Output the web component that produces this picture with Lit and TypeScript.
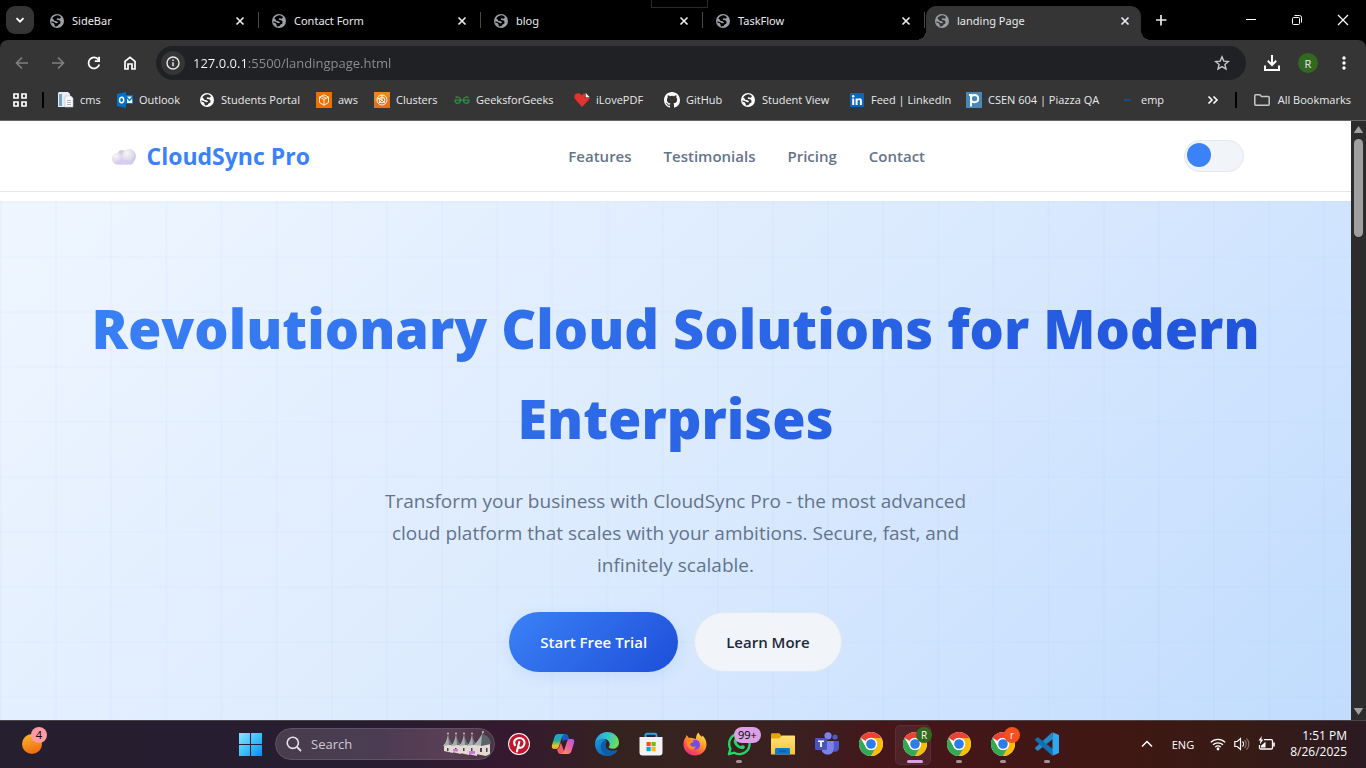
import { LitElement, html, svg, css, nothing } from "lit";
import { customElement, property } from "lit/decorators.js";
import { classMap } from "lit/directives/class-map.js";

const globe = (fg: string, bg: string) => html`<svg class="ico" width="16" height="16" viewBox="0 0 16 16" aria-hidden="true">
  <circle cx="8" cy="8" r="7" fill=${fg} />
  <path fill=${bg} d="M8.700 2.300 C6.500 2.300 4 3.700 3.300 5.600 L4.600 6.400 5.200 7.800 7.600 8.300 8.900 9.200 8.700 10.100 7 10.300 5.500 9.200 2.300 8.300 C2.400 10.500 4 12.800 6.400 13.500 L8.600 13 9.600 11.600 11.400 10.400 11.500 8.500 10.300 7.300 8.300 6.900 7.600 6 8.500 5.200 10.800 5.700 12 4.300 C11.200 3.300 10 2.500 8.700 2.300Z" />
  <path fill=${fg} d="M2.500 9.500 4.700 10.300 5.700 11.900 5.600 13.600 3.500 12.500Z" />
</svg>`;

const closeX = html`<svg width="16" height="16" viewBox="0 0 16 16" aria-hidden="true">
  <path d="M4.500 4.500 11.500 11.500M11.500 4.500 4.500 11.500" stroke="#e8eaed" stroke-width="1.700" />
</svg>`;

const chromeLogo = svg`
  <circle cx="12" cy="12" r="12" fill="#fff" />
  <path fill="#ea4335" d="M12 0a12 12 0 0 1 10.390 6H12a6 6 0 0 0-5.200 3L1.600 6A12 12 0 0 1 12 0Z" />
  <path fill="#fbbc04" d="M22.390 6A12 12 0 0 1 12 24l5.200-9A6 6 0 0 0 17.200 9L12 6Z" />
  <path fill="#34a853" d="M1.600 6 6.800 15A6 6 0 0 0 12 18a6 6 0 0 0 5.200-3L12 24A12 12 0 0 1 1.600 6Z" />
  <circle cx="12" cy="12" r="6.200" fill="#fff" />
  <circle cx="12" cy="12" r="4.800" fill="#2b7de9" />`;

const icons: Record<string, unknown> = {
  cms: html`<svg class="ico" width="16" height="16" viewBox="0 0 16 16"><path fill="#e9edf2" d="M1 0h9l2 2v13H0V1z" /><path fill="#6da3c9" d="M1 2h3v12H1z" /><path fill="#f8f9fb" d="M7 4h6l2 2v9H7z" stroke="#b9c0cc" stroke-width=".6" /><path stroke="#aab4c4" d="M9 8.500h4M9 10.500h4M9 12.500h4" /></svg>`,
  outlook: html`<svg class="ico" width="16" height="16" viewBox="0 0 16 16"><path fill="#0072c6" d="M0 2 9 0v16l-9-2z" /><path fill="#0072c6" d="M9 3h7v9H9z" /><path fill="#fff" d="M10 4.500h5L12.500 7.500zM10 6.500l2.500 3 2.700-3V11H10z" /><ellipse cx="4.600" cy="8" rx="2.100" ry="2.700" fill="none" stroke="#fff" stroke-width="1.500" /></svg>`,
  student: globe("#ffffff", "#353535"),
  aws: html`<svg class="ico" width="16" height="16" viewBox="0 0 16 16"><path fill="#ed7100" d="M0 0h16v16H0z" /><path fill="none" stroke="#fff" stroke-width=".9" d="M8 2.800 12.500 5v5.500L8 13.200l-4.500-2.700V5zM3.500 5 8 7.500 12.500 5M8 7.500v5.700M5.700 4l4.600 2.300" /></svg>`,
  clusters: html`<svg class="ico" width="16" height="16" viewBox="0 0 16 16"><path fill="#e2701d" d="M0 0h16v16H0z" /><path fill="#f29a1f" d="M0 0h16v5L0 10z" opacity=".6" /><circle cx="8" cy="8" r="5" fill="none" stroke="#fff" stroke-width=".9" /><circle cx="8" cy="8" r="2.800" fill="none" stroke="#fff" stroke-width=".9" /><path stroke="#fff" stroke-width=".9" d="m8 8 3.500 3.500M8 8l-3 3M8 3v5M3.500 6 8 8" /></svg>`,
  gfg: html`<svg class="ico" width="16" height="16" viewBox="0 0 16 16"><path fill="none" stroke="#2f8d46" stroke-width="1.300" d="M1.500 5.600c2-1.200 5-.6 5 2.500 0 2-1.300 3.200-2.800 3.200S1 10.200 1 8.200h14c0 2-1.200 3.100-2.700 3.100S9.500 10.100 9.500 8.100c0-3.100 3-3.700 5-2.500" /></svg>`,
  pdf: html`<svg class="ico" width="16" height="16" viewBox="0 0 16 16"><path fill="#e5322d" d="M8 15 1.400 7.600C-.8 4.600.8 1.300 3.800 1.200 5.700 1.100 7 2 8 3.600 8.800 2 10 1.200 11 1.200v4.500h4.800c-.1.700-.4 1.400-.9 2z" /><path fill="#fff" d="m11.700 1 4 4.200h-4z" /></svg>`,
  github: html`<svg class="ico" width="16" height="16" viewBox="0 0 16 16"><path fill="#fff" d="M8 0C3.580 0 0 3.580 0 8c0 3.540 2.290 6.530 5.470 7.590.4.070.55-.17.55-.38 0-.19-.01-.82-.01-1.490-2.010.37-2.530-.49-2.690-.94-.09-.23-.48-.94-.82-1.130-.28-.15-.68-.52-.01-.53.63-.01 1.080.58 1.230.82.72 1.210 1.870.87 2.330.66.07-.52.28-.87.510-1.070-1.780-.2-3.640-.89-3.640-3.950 0-.87.31-1.590.82-2.150-.08-.2-.36-1.020.08-2.120 0 0 .67-.21 2.200.82a7.500 7.500 0 0 1 4 0c1.530-1.040 2.200-.82 2.200-.82.44 1.100.16 1.920.08 2.120.51.56.82 1.270.82 2.150 0 3.070-1.870 3.750-3.650 3.950.29.25.54.73.54 1.480 0 1.070-.01 1.930-.01 2.200 0 .21.15.46.55.38A8.010 8.010 0 0 0 16 8c0-4.420-3.580-8-8-8Z" /></svg>`,
  linkedin: html`<svg class="ico" width="16" height="16" viewBox="0 0 16 16"><rect x="1" y="1" width="14" height="14" rx="1" fill="#0a66c2" /><path fill="#fff" d="M3.200 6.400h2V13h-2zM6.600 6.400h2v.9c.4-.7 1.100-1.100 2-1.100 1.800 0 2.300 1.200 2.300 2.900V13h-2V9.500c0-.9-.1-1.600-1-1.600s-1.300.7-1.300 1.600V13h-2z" /><circle cx="4.200" cy="4.300" r="1.200" fill="#fff" /></svg>`,
  piazza: html`<svg class="ico" width="16" height="16" viewBox="0 0 16 16"><path fill="#4b87b5" d="M0 0h16v16H0z" /><path fill="none" stroke="#fff" stroke-width="1.900" d="M3 3h2v11.500M5 6c0-2 1.200-3 3.400-3 2.500 0 3.800 1.500 3.800 3.600S10.800 10.300 8.500 10.300 5 9 5 7z" /></svg>`,
  emp: html`<svg class="ico" width="16" height="16" viewBox="0 0 16 16"><path fill="#14508c" d="M5 7.200h7l-.6 1.800H4.600z" /></svg>`,

  pinterest: html`<svg width="24" height="24" viewBox="0 0 24 24"><circle cx="12" cy="12" r="11" fill="#fff" /><circle cx="12" cy="12" r="10" fill="#c1182c" /><path fill="none" stroke="#fff" stroke-width="2.100" stroke-linecap="round" d="M7.900 13.200C5.800 9.300 8.600 6 12.300 6c3.300 0 5.400 2.100 5.200 4.900-.2 3.200-2.300 5.100-4.300 4.800-1.300-.2-1.900-1-2-1.900M12.300 9.800 9.900 19.500" /></svg>`,
  copilot: html`<svg width="24" height="24" viewBox="0 0 24 24">
    <defs>
      <linearGradient id="cpA" x1="0" y1="0" x2="0" y2="1"><stop offset="0" stop-color="#1f9cf0" /><stop offset=".45" stop-color="#23b38f" /><stop offset=".8" stop-color="#e9c72c" /><stop offset="1" stop-color="#f39a2b" /></linearGradient>
      <linearGradient id="cpB" x1="1" y1="0" x2="0" y2="1"><stop offset="0" stop-color="#a45cf0" /><stop offset=".5" stop-color="#f0609a" /><stop offset="1" stop-color="#fba353" /></linearGradient>
    </defs>
    <path fill="#1b58c4" d="M8 2h6.500c1.600 0 2.300 1 2.800 2.500L18.500 8h-4c-1.500 0-2.200 1-2.600 2.500L11 6z" />
    <path fill="#ee5f6d" d="M16 22H9.500C7.900 22 7.200 21 6.700 19.500L6 17c1.400-.3 2.200-1.200 2.700-3l1.200-3.500L13 19z" />
    <path fill="url(#cpA)" d="M7 2h6.500c-1.500.3-2 1.500-2.500 3l-3 9.500C7.200 16.500 6 17 4.500 17H3.200C1 17 .3 15.200 1 13L3.500 5C4.200 3 5.300 2 7 2z" />
    <path fill="url(#cpB)" d="M17 22h-6.500c1.500-.3 2-1.500 2.500-3l3-9.500c.8-2 1.800-2.500 3.500-2.500h1.300c2.200 0 2.900 1.700 2.200 3.900L20.500 19c-.7 2-1.800 3-3.500 3z" />
  </svg>`,
  edge: html`<svg width="24" height="24" viewBox="0 0 24 24">
    <defs>
      <linearGradient id="edA" x1="0" y1="0" x2="1" y2=".3"><stop offset="0" stop-color="#1c9fe0" /><stop offset=".55" stop-color="#35c3d0" /><stop offset="1" stop-color="#66dd5b" /></linearGradient>
      <linearGradient id="edB" x1="0" y1="0" x2="1" y2="1"><stop offset="0" stop-color="#1b9be2" /><stop offset="1" stop-color="#0c4f9e" /></linearGradient>
    </defs>
    <path fill="url(#edB)" d="M0 12c0 7 5.200 12 12 12 4.500 0 8.300-2.200 10.200-5.300.4-.7-.2-1-.8-.7-4.400 2-10.300.3-11-4-.3-1.700.4-3 1.200-3.900L9 6.500C4 6 .3 8.400 0 12z" />
    <path fill="#0f5cab" d="M9 8.500C5.500 11 5 15.500 7 19c1.700 3 4.500 4.800 7.500 4.700 3.200-.5 6-2.400 7.700-5 .4-.7-.2-1-.8-.7-4.400 2-10.300.3-11-4-.2-1.600.3-2.900 1.200-3.900z" />
    <path fill="url(#edA)" d="M0 12C.3 5 5.500 0 12 0c7 0 12 5 12 10.500 0 4-3 6.300-6.300 6.300-2.600 0-4-.9-4-1.700 0-.6 1-1 1-3 0-2.500-2.500-5.300-6.700-5.300S.3 9 0 12z" />
  </svg>`,
  store: html`<svg width="24" height="24" viewBox="0 0 24 24"><path fill="none" stroke="#2aa5ea" stroke-width="1.900" d="M6.500 7V3.200c0-1 .6-1.500 1.500-1.500h8c.9 0 1.500.5 1.500 1.500V7" /><path fill="#f3f3f5" d="M.5 5h23v15.500a3 3 0 0 1-3 3h-17a3 3 0 0 1-3-3z" /><path fill="#f25022" d="M7.500 10h4.200v4.200H7.500z" /><path fill="#7fba00" d="M12.500 10h4.200v4.200h-4.200z" /><path fill="#00a4ef" d="M7.500 15h4.200v4.200H7.500z" /><path fill="#ffb900" d="M12.500 15h4.200v4.200h-4.200z" /></svg>`,
  firefox: html`<svg width="24" height="24" viewBox="0 0 24 24">
    <defs><linearGradient id="ffA" x1=".8" y1="0" x2=".2" y2="1"><stop offset="0" stop-color="#ffe14a" /><stop offset=".4" stop-color="#ff9a2b" /><stop offset=".75" stop-color="#ff4a4f" /><stop offset="1" stop-color="#e2299a" /></linearGradient></defs>
    <path fill="url(#ffA)" d="M15.500.5c.7 2.300 2.300 3.300 3.500 4.500l.5-1.500c2.200 2 4 5.200 4 9C23.500 18.800 18.300 23.500 12 23.500S.5 18.800.5 12.500C.5 9 1.600 6.500 3 5l.5-2 2.500 3c1-.4 2-.4 3-.1L13 7c-.2-2.500.7-5 2.500-6.500z" />
    <circle cx="12" cy="12.800" r="5" fill="#7a4be0" />
    <path fill="#ff8a2a" d="M4 9c2.500-1.500 4.500-1.300 7 .2L8.500 11c-1.300.2-1.500 1.200-1 2.200.8 1.500 2.500 2 4.500 1 1.300 1.200-.8 3.300-3.300 3.300C5.500 17.500 3.500 13.500 4 9z" />
  </svg>`,
  whatsapp: html`<svg width="24" height="24" viewBox="0 0 24 24"><path fill="none" stroke="#25d366" stroke-width="2.400" stroke-linejoin="round" d="m1.900 22.200 1.500-5.500A10.200 10.200 0 1 1 7.300 20.700z" /><path fill="#25d366" d="M8 6.500c.6-.6 1.400-.4 1.700.3l.8 1.900c.2.600-.9 1.500-.7 1.900.9 1.800 2.200 2.900 3.900 3.600.5.100 1.200-1.300 1.700-1.200l2.100 1c.7.400.3 1.900-.4 2.500-1.400 1.200-3.500.7-5.700-.5-2.200-1.300-4-3.600-4.500-5.400-.4-1.700.100-3.200 1.100-4.100z" /></svg>`,
  explorer: html`<svg width="24" height="24" viewBox="0 0 24 24"><defs><linearGradient id="fxA" x1="0" y1="0" x2="0" y2="1"><stop offset="0" stop-color="#ffe07a" /><stop offset="1" stop-color="#ffc42e" /></linearGradient></defs><path fill="#e5a50a" d="M0 2.500C0 1.700.6 1.200 1.300 1.200h7l2.300 2.500V8H0z" /><path fill="url(#fxA)" d="M0 6.500h8l3-3h12c.6 0 1 .4 1 1v18H0z" /><path fill="#1277c9" d="M4 22.500v-5c0-.8.6-1.500 1.500-1.500h12c.9 0 1.500.7 1.500 1.500v5z" /><path stroke="#0a5597" stroke-width="1.200" d="M8 19h7" /></svg>`,
  teams: html`<svg width="24" height="24" viewBox="0 0 24 24"><circle cx="20" cy="5" r="2.600" fill="#5059c9" /><path fill="#5059c9" d="M17 9h7v6.500c0 3.500-3 5-5.500 4z" /><circle cx="13" cy="3.800" r="3.600" fill="#7b83eb" /><path fill="#7b83eb" d="M6.500 9h12.300v7.500c0 4-2.700 6-6 6s-6.300-2-6.300-6z" /><rect y="6" width="12" height="12" rx="1.200" fill="#4b53bc" /><path fill="#fff" d="M3 8.500h6v1.600H6.900V15H5.100v-4.900H3z" /></svg>`,
  chrome: html`<svg width="24" height="24" viewBox="0 0 24 24">${chromeLogo}</svg>`,
  vscode: html`<svg width="24" height="24" viewBox="0 0 24 24"><path fill="#2489ca" d="M17 .5 18 7 3.300 18.500c-.4.300-.8.300-1.200 0L.400 17c-.5-.4-.5-1 0-1.500z" /><path fill="#1070b3" d="M17 23.500 18 17 3.300 5.500c-.4-.3-.8-.3-1.200 0L.400 7c-.5.4-.5 1 0 1.500z" /><path fill="#2fa8f2" d="M17.500.200 24 3v18l-6.500 2.800z" /></svg>`,
};

interface Bookmark { icon: string; label: string }
interface TaskItem { icon: string; label: string; state?: "running" | "active"; badge?: string; tone?: string }

@customElement("browser-tab")
export class BrowserTab extends LitElement {
  @property() label = "";
  @property({ type: Boolean, reflect: true }) active = false;

  static styles = css`
    :host { display: flex; align-items: center; flex: 0 1 222px; height: 34px; min-width: 0; color: #e8eaed; position: relative; box-sizing: border-box; padding: 0 11px 5px; border-right: 1px solid transparent; }
    .ico { display: block; flex: none; }
    .tab { display: flex; align-items: center; gap: 7px; flex: 1; min-width: 0; padding: 0; border: 0; background: none; color: inherit; font: 11px/16px "Noto Sans", sans-serif; text-align: left; }
    .close { display: grid; place-items: center; width: 16px; height: 16px; padding: 0; border: 0; background: none; }
    .line { position: absolute; right: 0; top: 6px; width: 1px; height: 16px; background: #4a4a4a; }
    :host([active]) { flex-basis: 215px; background: #353535; border-radius: 10px 10px 0 0; padding: 0 7px 5px 8px; }
    :host([active])::before, :host([active])::after { content: ""; position: absolute; bottom: 0; width: 10px; height: 10px; }
    :host([active])::before { left: -10px; background: radial-gradient(circle at 0 0, transparent 10px, #353535 10px); }
    :host([active])::after { right: -11px; background: radial-gradient(circle at 100% 0, transparent 10px, #353535 10px); }
    .line.hidden { display: none; }
  `;

  render() {
    return html`
      <button class="tab" role="tab" aria-selected=${this.active ? "true" : "false"}>
        ${globe("#9aa0a6", this.active ? "#353535" : "#000000")}<span>${this.label}</span>
      </button>
      <button class="close" aria-label="Close tab">${closeX}</button>
      ${this.active ? nothing : html`<span class="line"></span>`}
    `;
  }
}

@customElement("landing-page")
export class LandingPage extends LitElement {
  static styles = css`
    :host { display: block; overflow: hidden; background: #fff; font-family: "Open Sans", sans-serif; }
    .header { border-bottom: 1px solid #e2e8f0; background: #fff; margin-bottom: 9px; }
    .bar { box-sizing: border-box; max-width: 1200px; height: 70px; margin: 0 auto; padding: 0 32px; display: flex; align-items: center; justify-content: space-between; }
    .logo { display: flex; align-items: center; gap: 11px; padding-left: 4px; color: #3b82f6; font-size: 23px; line-height: 38px; font-weight: 700; text-decoration: none; }
    .nav { display: flex; gap: 32px; }
    .nav a { color: #64748b; font-size: 15px; line-height: 26px; font-weight: 600; text-decoration: none; }
    .switch { appearance: none; box-sizing: border-box; width: 60px; height: 32px; margin: 0; padding: 2px; border: 1px solid #e2e8f0; border-radius: 16px; background: #f1f5f9; display: flex; }
    .switch::before { content: ""; width: 24px; height: 24px; border-radius: 50%; background: #3b82f6; }
    .hero { min-height: 520px; box-sizing: border-box; padding: 82px 32px 120px; text-align: center;
      background:
        linear-gradient(to right, rgba(59, 130, 246, 0.03) 2px, transparent 2px) 0 0 / calc(100% / 24.5) 100%,
        linear-gradient(to bottom, rgba(59, 130, 246, 0.02) 2px, transparent 2px) 0 0 / 100% 55px,
        linear-gradient(135deg, #eff6ff 0%, #dbeafe 50%, #bfdbfe 100%); }
    .title { max-width: 1200px; margin: 0 auto 22px; font-size: 54px; line-height: 90px; font-weight: 800; color: transparent; background: linear-gradient(135deg, #3b82f6, #1d4ed8); background-clip: text; -webkit-background-clip: text; }
    .lead { max-width: 600px; margin: 0 auto 31px; color: #64748b; font-size: 19px; line-height: 32px; }
    .actions { display: flex; justify-content: center; align-items: center; gap: 16px; }
    .btn { height: 60px; padding: 0 31px 1px; border: 0; border-radius: 30px; font: 600 15px/24px "Open Sans", sans-serif; }
    .primary { color: #fff; background: linear-gradient(135deg, #3b82f6, #1d4ed8); box-shadow: 0 4px 15px rgba(59, 130, 246, 0.12); }
    .secondary { color: #1e293b; background: #f1f5f9; border: 1px solid #e2e8f0; }
  `;

  render() {
    return html`
      <header class="header">
        <div class="bar">
          <a class="logo" href="#">
            <svg width="24" height="20" viewBox="0 -2 24 20" aria-hidden="true">
              <defs>
                <linearGradient id="cl" x1="0" y1="0" x2="0" y2="1"><stop offset="0" stop-color="#efedf4" /><stop offset="1" stop-color="#cfc5ee" /></linearGradient>
                <radialGradient id="cr" cx=".35" cy=".3" r=".8"><stop offset="0" stop-color="#f6f4f8" /><stop offset=".6" stop-color="#dfdae9" /><stop offset="1" stop-color="#c6bce2" /></radialGradient>
              </defs>
              <rect x="2" y="9" width="20" height="7.500" rx="3.700" fill="url(#cl)" />
              <circle cx="10" cy="6" r="4" fill="#d4d2d6" />
              <circle cx="5.500" cy="10.500" r="5.500" fill="url(#cr)" />
              <circle cx="17" cy="8" r="7" fill="url(#cr)" />
              <rect x="4" y="12" width="16" height="4.500" rx="2" fill="#d6cdf0" opacity=".7" />
            </svg>
            <span>CloudSync Pro</span>
          </a>
          <nav class="nav">
            ${["Features", "Testimonials", "Pricing", "Contact"].map((t) => html`<a href="#">${t}</a>`)}
          </nav>
          <input class="switch" type="checkbox" role="switch" aria-label="Dark theme" />
        </div>
      </header>
      <section class="hero">
        <h1 class="title">Revolutionary Cloud Solutions for Modern Enterprises</h1>
        <p class="lead">Transform your business with CloudSync Pro - the most advanced cloud platform that scales with your ambitions. Secure, fast, and infinitely scalable.</p>
        <div class="actions">
          <button class="btn primary">Start Free Trial</button>
          <button class="btn secondary">Learn More</button>
        </div>
      </section>
    `;
  }
}

@customElement("task-bar")
export class TaskBar extends LitElement {
  items: TaskItem[] = [
    { icon: "pinterest", label: "Pinterest" },
    { icon: "copilot", label: "Copilot" },
    { icon: "edge", label: "Edge" },
    { icon: "store", label: "Store" },
    { icon: "firefox", label: "Firefox" },
    { icon: "whatsapp", label: "WhatsApp", state: "running", badge: "99+", tone: "lilac" },
    { icon: "explorer", label: "File Explorer" },
    { icon: "teams", label: "Teams" },
    { icon: "chrome", label: "Chrome" },
    { icon: "chrome", label: "Chrome, profile R", state: "active", badge: "R", tone: "green" },
    { icon: "chrome", label: "Chrome", state: "running" },
    { icon: "chrome", label: "Chrome, profile r", state: "running", badge: "r", tone: "orange" },
    { icon: "vscode", label: "Visual Studio Code", state: "running" },
  ];

  static styles = css`
    :host { display: flex; align-items: center; height: 48px; box-sizing: border-box; padding-bottom: 1px; border-top: 1px solid #49434a; color: #fff; font-family: "Open Sans", sans-serif;
      background: linear-gradient(90deg, #261f2f 0%, #271d31 27%, #35192f 37%, #35231f 46%, #3a2020 58%, #45161a 65%, #401713 82%, #371b15 91%, #2b1a22 100%); }
    svg { display: block; }
    button { padding: 0; border: 0; background: none; color: inherit; font-family: inherit; }
    .widgets { position: relative; width: 24px; height: 24px; margin-left: 20px; margin-right: 184px; }
    .start { width: 44px; height: 44px; display: grid; place-items: center; }
    .search { display: flex; align-items: center; gap: 9px; box-sizing: border-box; width: 220px; height: 32px; margin: 0 2px 0 3px; padding-left: 10px; overflow: hidden; border: 1px solid #5e5263; border-radius: 16px; background: linear-gradient(90deg, #463d4d, #4c3c53 50%, #5b3f55 80%, #4c3344); }
    .search input { flex: 1; min-width: 0; padding: 0; border: 0; outline: 0; background: none; color: #fff; font: 13px/20px "Open Sans", sans-serif; }
    .search input::placeholder { color: #d0cad2; }
    .item { position: relative; width: 44px; height: 44px; display: grid; place-items: center; }
    .item.active::before { content: ""; position: absolute; left: 2px; top: 3px; width: 34px; height: 38px; border: 1px solid #573136; border-radius: 5px; background: #4f2327; }
    .item.active::after, .item.running::after { content: ""; position: absolute; left: 19px; bottom: 3px; width: 6px; height: 3px; border-radius: 2px; background: #a19296; }
    .item.active::after { left: 14px; width: 16px; background: #dba0e6; }
    .item svg { position: relative; }
    .badge { position: absolute; left: 23px; top: 5px; box-sizing: border-box; min-width: 16px; height: 16px; border-radius: 8px; font-size: 10px; line-height: 16px; text-align: center; color: #fff; }
    .widgets .badge { left: 11px; top: -5px; background: #ff99a4; color: #000; font-size: 11px; }
    .badge.lilac { left: 17px; padding: 0 4px; background: #dba0e6; color: #000; font-size: 11px; }
    .badge.green { background: #33691e; }
    .badge.orange { background: #f4511e; }
    .tray { display: flex; align-items: center; margin-left: auto; padding-right: 19px; font-size: 12px; }
    .lang { margin: 0 16px 0 18px; font-size: 11px; }
    .status { display: flex; align-items: center; gap: 8px; }
    .clock { margin-left: 15px; line-height: 16px; text-align: right; }
  `;

  render() {
    return html`
      <button class="widgets" aria-label="Widgets">
        <svg width="24" height="24" viewBox="0 0 24 24"><defs><linearGradient id="sun" x1=".3" y1="0" x2=".6" y2="1"><stop offset="0" stop-color="#f8b62c" /><stop offset="1" stop-color="#f0680f" /></linearGradient></defs><circle cx="12" cy="12" r="10" fill="url(#sun)" /></svg>
        <span class="badge">4</span>
      </button>
      <button class="start" aria-label="Start">
        <svg width="24" height="24" viewBox="0 0 24 24"><defs><linearGradient id="win" x1="0" y1="0" x2="1" y2="1"><stop offset="0" stop-color="#8be3ff" /><stop offset=".5" stop-color="#3fc0fb" /><stop offset="1" stop-color="#0a8cf4" /></linearGradient></defs><path fill="url(#win)" d="M1 1h11v11H1zM13 1h11v11H13zM1 13h11v11H1zM13 13h11v11H13z" /></svg>
      </button>
      <label class="search">
        <svg width="16" height="16" viewBox="0 0 16 16" aria-hidden="true"><circle cx="6.800" cy="6.800" r="5.600" fill="none" stroke="#e6e2e8" stroke-width="1.600" /><path stroke="#e6e2e8" stroke-width="1.800" d="m11 11 4 4" /></svg>
        <input type="text" placeholder="Search" aria-label="Search" />
        <svg width="51" height="28" viewBox="0 0 51 28" aria-hidden="true">
          ${[0, 8, 16, 24].map((x, i) => svg`
            <path fill="#e3dad4" d="M${x + 1} 14h9v${9 + i}l-9 -2z" />
            <path fill="#a5adae" d="M${x} 16 C${x + 3} 13 ${x + 4} 9 ${x + 5} 4 L${x + 7} 15z" />
            <path fill="#6b7478" d="M${x + 5} 4 C${x + 6} 9 ${x + 8} 13 ${x + 10} 15 L${x + 6} 15z" />
            <path fill="#4a4450" d="M${x + 4} 18h1.500v3h-1.500z" />
            <circle cx=${x + 5} cy="3.500" r=".9" fill="#cdc6c6" />`)}
          <path fill="#e3dad4" d="M33 14h14v10l-4 2-10-2z" />
          <path fill="#a9b1b3" d="M31 15 C35 11 38 6 40 2 L40 16z" />
          <path fill="#5a6368" d="M39 4 C44 5 48 9 48 14 L38 16z" />
          <path fill="#4a4450" d="M37 18h2v4h-2zM43 18h1.500v4h-1.500z" />
          <circle cx="40" cy="2" r="1" fill="#cdc6c6" />
          <path fill="#d077da" d="M10 19h5v2.500h-5zM26 21h6v3h-6z" />
        </svg>
      </label>
      ${this.items.map((t) => html`
        <button class=${classMap({ item: true, active: t.state === "active", running: t.state === "running" })} aria-label=${t.label}>
          ${icons[t.icon]}${t.badge ? html`<span class="badge ${t.tone ?? ""}">${t.badge}</span>` : nothing}
        </button>`)}
      <div class="tray">
        <button aria-label="Show hidden icons"><svg width="14" height="12" viewBox="0 0 14 12"><path fill="none" stroke="#fff" stroke-width="1.500" d="m2 8.500 5-5 5 5" /></svg></button>
        <button class="lang">ENG</button>
        <div class="status">
          <svg width="16" height="16" viewBox="0 0 16 16"><g fill="none" stroke="#fff" stroke-width="1.300"><path d="M.8 6.400c4-4 10.400-4 14.400 0" /><path d="M3 8.800c2.800-2.700 7.200-2.700 10 0" /><path d="M5.200 11.100c1.500-1.500 4.100-1.500 5.600 0" /></g><circle cx="8" cy="13" r="1.400" fill="#fff" /></svg>
          <svg width="16" height="16" viewBox="0 0 16 16"><path fill="none" stroke="#fff" stroke-width="1.200" d="M.8 5.500h2.400L6.500 2.500v11l-3.300-3H.8z" /><path fill="none" stroke="#fff" stroke-width="1.200" d="M8.500 5.500c1.300 1.300 1.300 3.700 0 5" /><path fill="none" stroke="#87706e" stroke-width="1.200" d="M10.500 4c2.200 2.200 2.200 5.800 0 8M12.500 2.300c3.200 3.200 3.200 8.200 0 11.400" /></svg>
          <svg width="17" height="16" viewBox="0 0 17 16"><path fill="none" stroke="#fff" stroke-width="1.300" d="M6 3.700h7.200c.8 0 1.300.5 1.300 1.300v6.700c0 .8-.5 1.300-1.300 1.300H2.800c-.8 0-1.300-.5-1.300-1.300V9" /><path fill="#fff" d="M15.200 6.500h1.600v4h-1.600zM3 11.500V9.700l4.500-4v5.800zM3.800 0 .5 4.600h2L1.800 8.400 5.400 3.500H3.300z" /></svg>
        </div>
        <div class="clock"><div>1:51 PM</div><div>8/26/2025</div></div>
      </div>
    `;
  }
}

@customElement("app-root")
export class AppRoot extends LitElement {
  tabs = ["SideBar", "Contact Form", "blog", "TaskFlow", "landing Page"];

  bookmarks: Bookmark[] = [
    { icon: "cms", label: "cms" },
    { icon: "outlook", label: "Outlook" },
    { icon: "student", label: "Students Portal" },
    { icon: "aws", label: "aws" },
    { icon: "clusters", label: "Clusters" },
    { icon: "gfg", label: "GeeksforGeeks" },
    { icon: "pdf", label: "iLovePDF" },
    { icon: "github", label: "GitHub" },
    { icon: "student", label: "Student View" },
    { icon: "linkedin", label: "Feed | LinkedIn" },
    { icon: "piazza", label: "CSEN 604 | Piazza QA" },
    { icon: "emp", label: "emp" },
  ];

  static styles = css`
    :host { display: flex; flex-direction: column; height: 100vh; overflow: hidden; background: #000; color: #e8eaed; font-family: "Open Sans", sans-serif; }
    svg { display: block; flex: none; }
    button { display: grid; place-items: center; padding: 0; border: 0; background: none; color: inherit; font: inherit; flex: none; }
    .strip { position: relative; display: flex; align-items: flex-end; height: 40px; }
    .search-tabs { width: 28px; height: 28px; margin: 0 4px 6px 6px; border-radius: 9px; background: #353535; }
    .tabs { display: flex; flex: 0 1 1103px; min-width: 0; }
    .new-tab { width: 28px; height: 28px; margin: 0 0 6px 6px; }
    .window { display: flex; margin-left: auto; height: 40px; }
    .window button { width: 46px; height: 40px; }
    .grip { position: absolute; left: 651px; top: -1px; width: 55px; height: 7px; border: 1px solid #2b2b2b; background: #000; }
    .chrome { background: #353535; border-radius: 8px 8px 0 0; border-bottom: 1px solid #666; }
    .toolbar { display: flex; align-items: center; height: 46px; padding: 0 8px; }
    .toolbar > button { width: 28px; height: 28px; margin-right: 8px; }
    .omnibox { display: flex; align-items: center; flex: 1; height: 34px; border-radius: 17px; background: #202124; padding: 0 16px 0 5px; margin: 0 12px 0 4px; }
    .info { width: 24px; height: 24px; border-radius: 50%; background: #353535; margin-right: 8px; }
    .url { flex: 1; min-width: 0; padding: 0; border: 0; outline: 0; font: 13px/20px "Open Sans", sans-serif; color: transparent; background: linear-gradient(90deg, #fff 54px, #8d9094 54px); background-clip: text; -webkit-background-clip: text; }
    .toolbar .avatar { width: 20px; height: 20px; margin: 0 12px 0 4px; border-radius: 50%; background: #33691e; font-size: 11px; }
    .toolbar .more { width: 16px; margin: 0 6px; }
    .bookmarks { display: flex; align-items: center; height: 34px; padding: 0 15px 6px 12px; box-sizing: border-box; font-size: 11px; line-height: 16px; white-space: nowrap; }
    .rule { flex: none; width: 2px; height: 16px; background: #000; }
    .bookmarks > .rule { margin: 0 14px; }
    .links { display: grid; grid-template-columns: 59px 82px 117px 58px 80px 120px 90px 76px 109px 117px 153px 44px; }
    .bm { display: flex; align-items: center; gap: 6px; color: #e8eaed; text-decoration: none; }
    .end { display: flex; align-items: center; margin-left: auto; }
    .end .rule { margin: 0 16px; }
    .end .bm { gap: 7px; }
    .view { flex: 1; min-height: 0; display: flex; overflow: hidden; }
    landing-page { flex: 1; min-width: 0; }
    .scroll { display: flex; flex-direction: column; align-items: center; width: 15px; padding: 4px 0; box-sizing: border-box; background: #2c2c2c; }
    .thumb { width: 9px; height: 98px; margin-top: 5px; border-radius: 5px; background: #9f9f9f; }
    .down { margin-top: auto; }
  `;

  render() {
    return html`
      <div class="strip">
        <button class="search-tabs" aria-label="Search tabs"><svg width="12" height="12" viewBox="0 0 12 12"><path fill="none" stroke="#fff" stroke-width="1.800" d="m2.500 4.200 3.500 3.500 3.500-3.500" /></svg></button>
        <div class="tabs" role="tablist">
          ${this.tabs.map((t, i) => html`<browser-tab .label=${t} ?active=${i === this.tabs.length - 1}></browser-tab>`)}
        </div>
        <button class="new-tab" aria-label="New tab"><svg width="14" height="14" viewBox="0 0 14 14"><path stroke="#e8eaed" stroke-width="1.700" d="M7 2v10.500M2 7h10.500" /></svg></button>
        <div class="window">
          <button aria-label="Minimize"><svg width="12" height="12" viewBox="0 0 12 12"><path stroke="#fff" d="M1 5.500h10" /></svg></button>
          <button aria-label="Restore"><svg width="12" height="12" viewBox="0 0 12 12"><g fill="none" stroke="#fff"><rect x="1.500" y="3.500" width="7" height="7" rx="1" /><path d="M3.500 1.500h5a2 2 0 0 1 2 2v5" /></g></svg></button>
          <button aria-label="Close"><svg width="12" height="12" viewBox="0 0 12 12"><path stroke="#fff" stroke-width="1.200" d="m1 1 10 10M11 1 1 11" /></svg></button>
        </div>
        <div class="grip"></div>
      </div>
      <div class="chrome">
        <div class="toolbar">
          <button aria-label="Back"><svg width="16" height="16" viewBox="0 0 16 16"><path fill="none" stroke="#808080" stroke-width="1.600" d="M14 8H3M8 2.500 2.500 8 8 13.500" /></svg></button>
          <button aria-label="Forward"><svg width="16" height="16" viewBox="0 0 16 16"><path fill="none" stroke="#808080" stroke-width="1.600" d="M2 8h11M8 2.500 13.500 8 8 13.500" /></svg></button>
          <button aria-label="Reload"><svg width="16" height="16" viewBox="0 0 16 16"><path fill="none" stroke="#fff" stroke-width="1.800" d="M13.300 9.500A5.500 5.500 0 1 1 12.500 4.700" /><path fill="#fff" d="M14 1.800V7H8.800V5.300h3.400V1.800z" /></svg></button>
          <button aria-label="Home"><svg width="16" height="16" viewBox="0 0 16 16"><path fill="none" stroke="#fff" stroke-width="1.700" d="M3 14V6.400l5-4 5 4V14H10V9H6v5z" /></svg></button>
          <div class="omnibox">
            <button class="info" aria-label="Site information"><svg width="16" height="16" viewBox="0 0 16 16"><circle cx="8" cy="8" r="6" fill="none" stroke="#e8eaed" stroke-width="1.400" /><path stroke="#e8eaed" stroke-width="1.500" d="M8 7.200v4M8 4.600v1.500" /></svg></button>
            <input class="url" type="text" aria-label="Address" value="127.0.0.1:5500/landingpage.html" />
            <button aria-label="Bookmark this page"><svg width="16" height="16" viewBox="0 0 16 16"><path fill="none" stroke="#c7c7c7" stroke-width="1.400" d="m8 1.800 1.800 4.300 4.600.4-3.500 3 1.100 4.600L8 11.600l-4 2.500 1.100-4.600-3.500-3 4.600-.4z" /></svg></button>
          </div>
          <button aria-label="Downloads"><svg width="18" height="18" viewBox="0 0 18 18"><path fill="none" stroke="#fff" stroke-width="2" d="M9 1v9.500M4.800 6.800 9 11l4.200-4.200M2 11.500V16h14v-4.500" /></svg></button>
          <button class="avatar" aria-label="Profile">R</button>
          <button class="more" aria-label="Menu"><svg width="4" height="16" viewBox="0 0 4 16" fill="#fff"><circle cx="2" cy="3" r="1.700" /><circle cx="2" cy="8" r="1.700" /><circle cx="2" cy="13" r="1.700" /></svg></button>
        </div>
        <div class="bookmarks">
          <button aria-label="Apps"><svg width="16" height="16" viewBox="0 0 16 16"><g fill="none" stroke="#fff" stroke-width="1.700"><path d="M2 2h4v4H2zM10 2h4v4h-4zM2 10h4v4H2zM10 10h4v4h-4z" /></g></svg></button>
          <span class="rule"></span>
          <nav class="links">
            ${this.bookmarks.map((b) => html`<a class="bm" href="#">${icons[b.icon]}<span>${b.label}</span></a>`)}
          </nav>
          <div class="end">
            <button aria-label="More bookmarks"><svg width="12" height="12" viewBox="0 0 12 12"><path fill="none" stroke="#fff" stroke-width="1.600" d="m1.500 2.500 3.500 3.500-3.500 3.500M6.500 2.500 10 6 6.500 9.500" /></svg></button>
            <span class="rule"></span>
            <a class="bm" href="#"><svg width="18" height="16" viewBox="0 0 18 16"><path fill="none" stroke="#c7c7c7" stroke-width="1.500" d="M1.800 3.800c0-.6.400-1 1-1h4l1.700 1.800h6.700c.6 0 1 .4 1 1v6.600c0 .6-.4 1-1 1H2.800c-.6 0-1-.4-1-1z" /></svg><span>All Bookmarks</span></a>
          </div>
        </div>
      </div>
      <main class="view">
        <landing-page></landing-page>
        <div class="scroll" aria-hidden="true">
          <svg width="9" height="9" viewBox="0 0 9 9"><path fill="#9f9f9f" d="M4.500 1 9 7.500Q9 8 8.500 8h-8Q0 8 0 7.500z" /></svg>
          <div class="thumb"></div>
          <svg class="down" width="9" height="9" viewBox="0 0 9 9"><path fill="#9f9f9f" d="M4.500 8 9 1.500Q9 1 8.500 1h-8Q0 1 0 1.500z" /></svg>
        </div>
      </main>
      <task-bar></task-bar>
    `;
  }
}
